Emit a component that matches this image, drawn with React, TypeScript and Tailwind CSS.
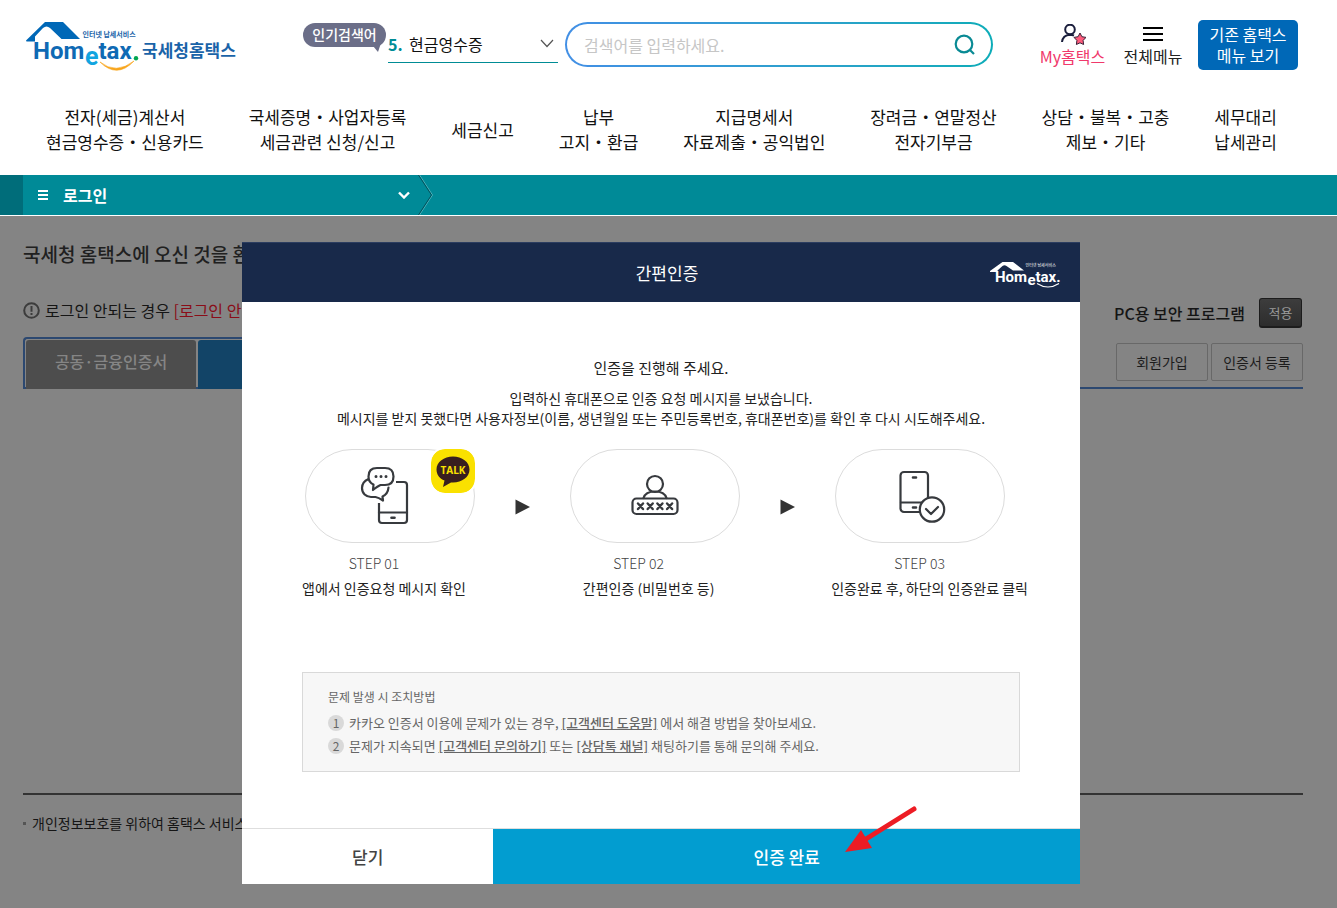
import React from "react";

const FONT = "font-['Noto_Sans_CJK_KR','Noto_Sans',sans-serif]";

const NAV: string[][] = [
  ["전자(세금)계산서", "현금영수증・신용카드"],
  ["국세증명・사업자등록", "세금관련 신청/신고"],
  ["세금신고"],
  ["납부", "고지・환급"],
  ["지급명세서", "자료제출・공익법인"],
  ["장려금・연말정산", "전자기부금"],
  ["상담・불복・고충", "제보・기타"],
  ["세무대리", "납세관리"],
];

const STEPS = [
  { step: "STEP 01", text: "앱에서 인증요청 메시지 확인" },
  { step: "STEP 02", text: "간편인증 (비밀번호 등)" },
  { step: "STEP 03", text: "인증완료 후, 하단의 인증완료 클릭" },
];

function Logo() {
  return (
    <svg width="214" height="54" viewBox="24 18 214 54" role="img" aria-label="Hometax 국세청홈택스" className="shrink-0">
      <path d="M26 40.5 L45 22 H63 L80 39 H61.5 L50 28 Q46.500 25 43 28 L35 36.500 V41.500 H26.500 Z" fill="#0068b7" />
      <g fontFamily="Roboto, sans-serif" fontWeight="700" fill="#0f6ab4">
        <text x="33" y="59" fontSize="24">Hom</text>
        <text x="85" y="65" fontSize="25" fill="#12a5e0">e</text>
        <text x="98.500" y="59" fontSize="24">tax</text>
      </g>
      <circle cx="136" cy="58.300" r="2.200" fill="#00a651" />
      <path d="M100 62 Q116 75 134 61 Q117 79 100 62 Z" fill="#f8a51b" stroke="#f8a51b" strokeWidth=".6" />
      <g fontFamily="'Noto Sans CJK KR', sans-serif" fontWeight="700" fill="#1a63a8">
        <text x="82.500" y="37" fontSize="7">인터넷 납세서비스</text>
        <text x="142" y="56.500" fontSize="17">국세청홈택스</text>
      </g>
    </svg>
  );
}

function LogoWhite() {
  return (
    <svg width="72" height="28" viewBox="0 0 72 28" role="img" aria-label="Hometax" fill="#fff">
      <path d="M0 10 L12.500 1 H23 L34 9.500 H23 L16.500 5 Q14.500 3.500 12.500 5 L7.500 9.500 V11 H0 Z" />
      <g fontFamily="Roboto, sans-serif" fontWeight="700">
        <text x="5" y="20.500" fontSize="15">Hom</text>
        <text x="37.500" y="23.500" fontSize="15">e</text>
        <text x="45.500" y="20.500" fontSize="15">tax.</text>
      </g>
      <text x="35.500" y="6" fontSize="4" fontFamily="'Noto Sans CJK KR', sans-serif">인터넷 납세서비스</text>
      <path d="M47 22.500 Q58 29.500 69 22.500" fill="none" stroke="#fff" strokeWidth="1.100" />
    </svg>
  );
}

function MyIcon() {
  return (
    <svg width="26" height="22" viewBox="0 0 26 22" fill="none">
      <circle cx="10" cy="5.500" r="4.800" stroke="#1a1e3c" strokeWidth="2" />
      <path d="M2 18 C2.500 13.300 6 11 10 10.700 C11.500 10.700 12.800 11 14 11.500" stroke="#1a1e3c" strokeWidth="2" />
      <path d="M20 9 L21.900 12.700 L26 13.400 L23.100 16.400 L23.600 20.500 L20 18.800 L16.400 20.500 L16.900 16.400 L14 13.400 L18.100 12.700 Z" fill="#ff5c7c" stroke="#3a2138" strokeWidth="1" strokeLinejoin="round" />
    </svg>
  );
}

function PhoneChatIcon() {
  return (
    <svg width="50" height="60" viewBox="0 0 50 60" fill="none" stroke="#373a3e" strokeWidth="2.200" strokeLinecap="round" strokeLinejoin="round" className="absolute left-[54px] top-[15px]">
      <path d="M36 17 H44 Q47 17 47 20 V55 Q47 58 44 58 H22 Q19 58 19 55 V38" strokeLinecap="butt" />
      <path d="M19 47.500 H47" />
      <path d="M31.500 52.800 H34.500" strokeWidth="2.600" />
      <path d="M8.500 14 C4 16 2 19.500 2 23 C2 28.500 6 32 11 32 H15.500 Q18.500 32.500 23 35.500 L22.500 31.500 Q28 29 28.500 22.500" />
      <path d="M17 3 H25 Q33.500 3 33.500 11.500 Q33.500 20 25 20 H20.500 Q18 21 13 25 L13.500 19.500 Q8.500 17.500 8.500 11.500 Q8.500 3 17 3 Z" fill="#fff" />
      <path d="M16 11.500 H16.010 M21 11.500 H21.010 M26 11.500 H26.010" strokeWidth="3" />
    </svg>
  );
}

function PasswordIcon() {
  return (
    <svg width="50" height="44" viewBox="0 0 50 44" fill="none" stroke="#373a3e" strokeWidth="2.200" strokeLinecap="round">
      <circle cx="25" cy="10" r="8" />
      <path d="M13.500 24 C15 19 19.500 17.500 25 17.500 C30.500 17.500 35 19 36.500 24" />
      <rect x="2.500" y="24.500" width="45" height="15.500" rx="4" />
      <path d="M8 29.500 l5 5.500 m0 -5.500 l-5 5.500 M17.700 29.500 l5 5.500 m0 -5.500 l-5 5.500 M27.400 29.500 l5 5.500 m0 -5.500 l-5 5.500 M37.100 29.500 l5 5.500 m0 -5.500 l-5 5.500" strokeWidth="2.400" />
    </svg>
  );
}

function PhoneCheckIcon() {
  return (
    <svg width="50" height="56" viewBox="0 0 50 56" fill="none" stroke="#373a3e" strokeWidth="2.200" strokeLinecap="round" strokeLinejoin="round" className="absolute left-[62px] top-[18px]">
      <rect x="2.500" y="4" width="27.500" height="40" rx="3.500" />
      <path d="M3 34.500 H29" />
      <path d="M15 9.500 H18 M15 39.500 H18" strokeWidth="2.600" />
      <circle cx="34" cy="41.500" r="12.200" fill="#fff" />
      <path d="M28 41 L33 46 L40 39" />
    </svg>
  );
}

function TalkBadge() {
  return (
    <svg width="44" height="44" viewBox="0 0 44 44" role="img" aria-label="카카오톡" className="absolute -right-px -top-px rounded-[14px] ring-2 ring-white">
      <rect width="44" height="44" rx="14" fill="#fae100" />
      <path d="M22 7.500 C31 7.500 38.500 13 38.500 20.500 C38.500 28 31 33.500 22 33.500 H20 L12 38 L13.500 31.500 C8.500 29.500 5.500 25.500 5.500 20.500 C5.500 13 13 7.500 22 7.500 Z" fill="#381e1f" />
      <text x="22" y="24.500" textAnchor="middle" fontSize="10" fontWeight="700" fontFamily="'Open Sans', sans-serif" fill="#fae100">TALK</text>
    </svg>
  );
}

function Play() {
  return (
    <svg width="15" height="16" viewBox="0 0 15 16" className="mt-[21px]" aria-hidden="true">
      <path d="M0.500 0.500 L15 8 L0.500 15.500 Z" fill="#333" />
    </svg>
  );
}

const OVAL = "relative flex h-[94px] w-[170px] items-center justify-center rounded-full border border-[#dcdcdc]";

function Num({ children }: { children: React.ReactNode }) {
  return (
    <span className="flex size-4 shrink-0 items-center justify-center rounded-full bg-[#d9d9d9] text-xs leading-4">{children}</span>
  );
}

function Header() {
  return (
    <header className="bg-white pb-[21px] text-[#111]">
      <div className="flex items-start pl-6 pr-[39px] pt-[18px]">
        <a href="#home" className="shrink-0"><Logo /></a>
        <div className="relative ml-[65px] mt-[5px] h-6 w-[83px] shrink-0 rounded-full bg-[#6b6e88] text-center text-sm font-medium leading-[22px] text-white">
          인기검색어
          <svg width="10" height="9" viewBox="0 0 10 9" className="absolute right-[3px] top-5" aria-hidden="true">
            <path d="M0 3 L5 9 L8 0 Z" fill="#6b6e88" />
          </svg>
        </div>
        <button type="button" aria-expanded="false" className="ml-[2px] mt-[7px] flex h-[38px] w-[170px] shrink-0 items-center border-b border-[#008c95] text-left text-base">
          <b className="w-[21px] text-base text-[#008c95]">5.</b>
          <span className="flex-1">현금영수증</span>
          <svg width="14" height="9" viewBox="0 0 14 9" fill="none" stroke="#555" strokeWidth="1.200" className="mr-1"><path d="M1 1 L7 7.500 L13 1" /></svg>
        </button>
        <form className="ml-[7px] mt-1 flex h-[45px] min-w-0 flex-1 rounded-full bg-linear-to-r from-[#428fe5] to-[#0cacb8] p-[2px]">
          <div className="flex min-w-0 flex-1 items-center rounded-full bg-white pl-[17px] pr-4">
            <input aria-label="검색어" placeholder="검색어를 입력하세요." className="min-w-0 flex-1 text-base outline-none placeholder:text-[#c6c6c6]" />
            <button type="submit" aria-label="검색">
              <svg width="22" height="22" viewBox="0 0 22 22" fill="none" stroke="#098a94" strokeWidth="2.200"><circle cx="11" cy="10" r="8.300" /><path d="M16.500 15.500 L21 20" /></svg>
            </button>
          </div>
        </form>
        <a href="#my" className="ml-[46px] mt-[6px] flex w-[67px] shrink-0 flex-col items-center whitespace-nowrap text-base leading-5 text-[#f0386b]">
          <MyIcon />
          <span>My홈택스</span>
        </a>
        <button type="button" className="ml-[17px] mt-[6px] flex w-[60px] shrink-0 flex-col items-center whitespace-nowrap text-base leading-5 text-[#222]">
          <svg width="20" height="22" viewBox="0 0 20 22" stroke="#000" strokeWidth="2"><path d="M0 4 H20 M0 10 H20 M0 16 H20" /></svg>
          <span>전체메뉴</span>
        </button>
        <button type="button" className="ml-[15px] mt-[2px] h-[50px] w-[100px] shrink-0 rounded-[5px] bg-[#0068b7] text-base leading-[21px] text-white">
          기존 홈택스<br />메뉴 보기
        </button>
      </div>
      <nav className="mt-8 flex items-center justify-between pl-[46px] pr-[60px] text-[17px] leading-[25px]">
        {NAV.map((lines) => (
          <a key={lines[0]} href="#menu" className="whitespace-nowrap text-center">
            {lines.map((l) => <span key={l} className="block">{l}</span>)}
          </a>
        ))}
      </nav>
    </header>
  );
}

function Breadcrumb() {
  return (
    <div className="flex h-[41px] border-b border-white bg-[#008a97] text-white">
      <div className="w-[23px] bg-[#006d7a]" />
      <button type="button" className="flex w-[394px] items-center pl-[15px] text-base font-bold">
        <svg width="10" height="10" viewBox="0 0 10 10" stroke="#fff" strokeWidth="2"><path d="M0 1 H10 M0 5 H10 M0 9 H10" /></svg>
        <span className="ml-[15px] flex-1 text-left">로그인</span>
        <svg width="12" height="8" viewBox="0 0 12 8" fill="none" stroke="#fff" strokeWidth="2.400" className="mr-[7px]"><path d="M1 1.500 L6 6.500 L11 1.500" /></svg>
      </button>
      <svg width="17" height="40" viewBox="0 0 17 40" fill="none" aria-hidden="true">
        <path d="M2.500 0 L15.500 20 L2.500 40" stroke="#4fb3bc" />
        <path d="M1.500 0 L14.500 20 L1.500 40" stroke="#03505a" />
      </svg>
    </div>
  );
}

function LoginPage() {
  const plain = "h-[38px] w-[92px] rounded-[2px] border border-[#686868] text-sm text-[#1c1c1c]";
  return (
    <div className="pl-[23px] pr-[34px] pt-6 text-[#151515]">
      <h1 className="text-[19px] font-medium leading-7 text-[#202020]">국세청 홈택스에 오신 것을 환영합니다.</h1>
      <div className="mt-[30px] flex h-[30px] items-start justify-between">
        <p className="flex items-center text-base leading-6">
          <svg width="17" height="17" viewBox="0 0 17 17" fill="none" stroke="#3c3c3c" strokeWidth="2" className="mr-[5px]"><circle cx="8.500" cy="8.500" r="7.300" /><path d="M8.500 4 V9.800 M8.500 11 V13" /></svg>
          로그인 안되는 경우&nbsp;<a href="#help" className="text-[#8a0d18]">[로그인 안내]</a>
        </p>
        <div className="flex items-center">
          <span className="text-base font-medium leading-[30px]">PC용 보안 프로그램</span>
          <button type="button" className="ml-[14px] mr-px h-[30px] w-[43px] rounded-[3px] border border-b-2 border-[#1c1c1c] bg-linear-to-b from-[#3d3d3d] to-[#2d2d2d] text-[13px] leading-[26px] text-[#9a9a9a]">적용</button>
        </div>
      </div>
      <div className="mt-[9px] flex h-[52px] border-b-2 border-[#2c4870]">
        <div role="tablist" className="flex h-[52px] w-[700px] gap-[2px] rounded-tl-[4px] border-l-2 border-t-2 border-[#2c4870] pl-px pt-px">
          <button type="button" role="tab" aria-selected="false" className="w-[170px] rounded-t-[3px] bg-[#4d4d4d] pb-2 text-base font-medium text-[#858585]">공동·금융인증서</button>
          <button type="button" role="tab" aria-selected="true" aria-label="간편인증 로그인" className="flex-1 rounded-t-[3px] bg-[#124467]" />
        </div>
        <div className="ml-auto flex gap-[3px] pt-[6px]">
          <button type="button" className={plain}>회원가입</button>
          <button type="button" className={plain}>인증서 등록</button>
        </div>
      </div>
      <div className="mt-[404px] border-t-2 border-[#333] pb-[71px] pt-4">
        <p className="flex items-center text-sm leading-6"><span className="mr-1.5 size-[3px] bg-[#555]" />개인정보보호를 위하여 홈택스 서비스 이용 후 로그아웃 하시기 바랍니다.</p>
      </div>
    </div>
  );
}

function AuthDialog() {
  return (
    <section role="dialog" aria-label="간편인증" className="w-[838px] bg-white text-[#222]">
      <header className="relative flex h-[60px] items-center justify-center border-t border-[#2b3d60] bg-[#18294a] pl-3">
        <h2 className="text-[17px] leading-6 text-white">간편인증</h2>
        <div className="absolute right-[18px] top-[18px]"><LogoWhite /></div>
      </header>
      <div className="px-[60px] pb-14 pt-[54px]">
        <div className="text-center text-sm leading-5">
          <p className="text-[15px] leading-6">인증을 진행해 주세요.</p>
          <p className="mt-2">입력하신 휴대폰으로 인증 요청 메시지를 보냈습니다.</p>
          <p>메시지를 받지 못했다면 사용자정보(이름, 생년월일 또는 주민등록번호, 휴대폰번호)를 확인 후 다시 시도해주세요.</p>
        </div>
        <div className="mt-[21px] flex items-center justify-between pl-[3px] pr-[15px]">
          <div className={OVAL}><PhoneChatIcon /><TalkBadge /></div>
          <Play />
          <div className={OVAL}><PasswordIcon /></div>
          <Play />
          <div className={OVAL}><PhoneCheckIcon /></div>
        </div>
        <ol className="-mr-2 mt-[7px] flex justify-between whitespace-nowrap text-center text-sm">
          {STEPS.map((s) => (
            <li key={s.step}>
              <span className="block pr-5 font-light leading-[26px] text-[#444]">{s.step}</span>
              <span className="block leading-6">{s.text}</span>
            </li>
          ))}
        </ol>
        <div className="mt-[72px] h-[100px] border border-[#d9d9d9] bg-[#f7f7f7] px-[25px] pt-3 text-[13px] leading-6 text-[#666]">
          <p className="text-xs leading-6">문제 발생 시 조치방법</p>
          <ol className="mt-[2px] leading-[23px]">
            <li className="flex items-center gap-[5px]">
              <Num>1</Num>
              <p>카카오 인증서 이용에 문제가 있는 경우, <a href="#guide" className="font-medium underline">[고객센터 도움말]</a> 에서 해결 방법을 찾아보세요.</p>
            </li>
            <li className="flex items-center gap-[5px]">
              <Num>2</Num>
              <p>문제가 지속되면 <a href="#contact" className="font-medium underline">[고객센터 문의하기]</a> 또는 <a href="#channel" className="font-medium underline">[상담톡 채널]</a> 채팅하기를 통해 문의해 주세요.</p>
            </li>
          </ol>
        </div>
      </div>
      <footer className="flex h-[56px] border-t border-[#dedede] text-[17px]">
        <button type="button" className="w-[30%] font-medium text-[#444]">닫기</button>
        <button type="button" className="flex-1 bg-[#029dd0] font-medium text-white">인증 완료</button>
      </footer>
    </section>
  );
}

export default function App() {
  return (
    <div className={`flex min-h-screen min-w-[1280px] flex-col overflow-hidden bg-white ${FONT}`}>
      <Header />
      <Breadcrumb />
      <main className="relative flex-1 bg-[#848484]">
        <LoginPage />
        <div className="absolute inset-x-0 top-[26px] flex justify-center pr-[15px]">
          <div className="relative">
            <AuthDialog />
            <svg width="76" height="50" viewBox="842 805 76 50" className="absolute bottom-[29px] right-[162px]" aria-hidden="true">
              <path d="M914 809 L866 839" stroke="#ed1c24" strokeWidth="5" strokeLinecap="round" />
              <path d="M845 852 L861 830 L872 848 Z" fill="#ed1c24" />
            </svg>
          </div>
        </div>
      </main>
    </div>
  );
}
